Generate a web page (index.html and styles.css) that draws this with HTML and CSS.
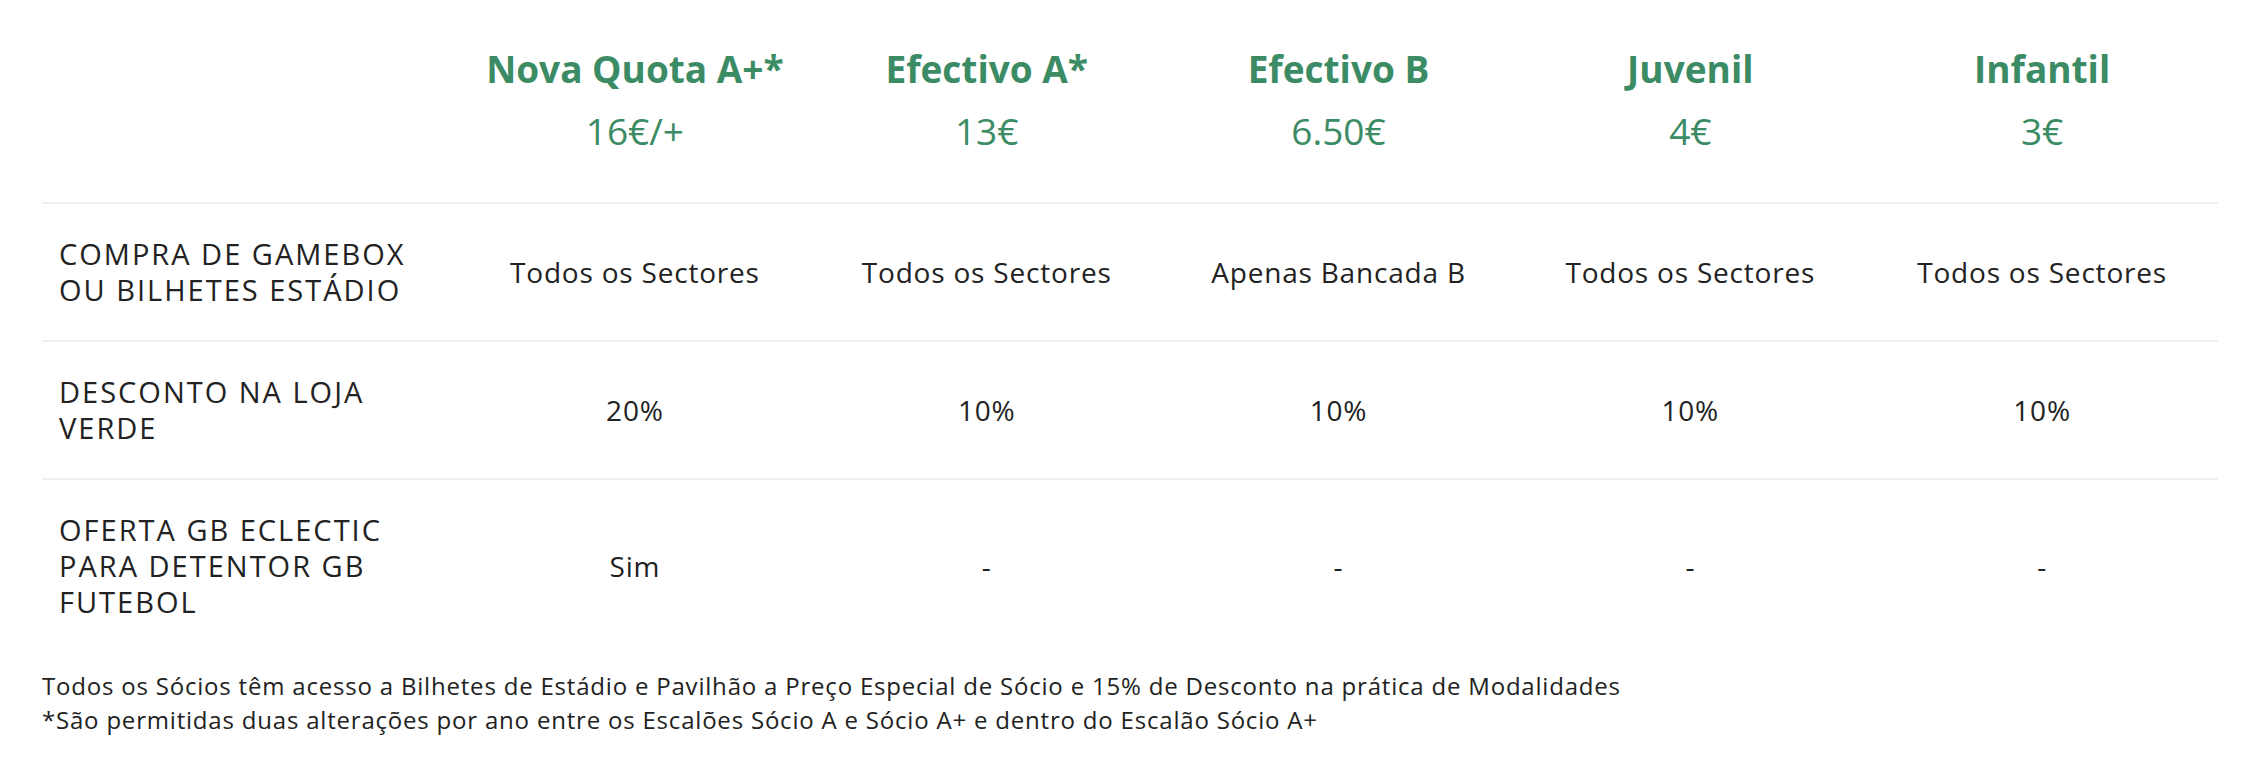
FILE: index.html
```html
<!DOCTYPE html>
<html lang="pt">
<head>
<meta charset="utf-8">
<title>Quotas</title>
<link rel="stylesheet" href="styles.css">
</head>
<body>
<div class="wrap">
  <div class="plans">
    <div class="row head">
      <div class="cell label"></div>
      <div class="cell plan"><div class="plan-name">Nova Quota A+*</div><div class="plan-price">16€/+</div></div>
      <div class="cell plan"><div class="plan-name">Efectivo A*</div><div class="plan-price">13€</div></div>
      <div class="cell plan"><div class="plan-name">Efectivo B</div><div class="plan-price">6.50€</div></div>
      <div class="cell plan"><div class="plan-name">Juvenil</div><div class="plan-price">4€</div></div>
      <div class="cell plan"><div class="plan-name">Infantil</div><div class="plan-price">3€</div></div>
    </div>
    <div class="row">
      <div class="cell label">COMPRA DE GAMEBOX<br>OU BILHETES ESTÁDIO</div>
      <div class="cell val">Todos os Sectores</div>
      <div class="cell val">Todos os Sectores</div>
      <div class="cell val">Apenas Bancada B</div>
      <div class="cell val">Todos os Sectores</div>
      <div class="cell val">Todos os Sectores</div>
    </div>
    <div class="row">
      <div class="cell label">DESCONTO NA LOJA<br>VERDE</div>
      <div class="cell val">20%</div>
      <div class="cell val">10%</div>
      <div class="cell val">10%</div>
      <div class="cell val">10%</div>
      <div class="cell val">10%</div>
    </div>
    <div class="row last">
      <div class="cell label">OFERTA GB ECLECTIC<br>PARA DETENTOR GB<br>FUTEBOL</div>
      <div class="cell val">Sim</div>
      <div class="cell val">-</div>
      <div class="cell val">-</div>
      <div class="cell val">-</div>
      <div class="cell val">-</div>
    </div>
  </div>
  <div class="notes">
    <p>Todos os Sócios têm acesso a Bilhetes de Estádio e Pavilhão a Preço Especial de Sócio e 15% de Desconto na prática de Modalidades</p>
    <p>*São permitidas duas alterações por ano entre os Escalões Sócio A e Sócio A+ e dentro do Escalão Sócio A+</p>
  </div>
</div>
</body>
</html>
```

FILE: styles.css
```css
html, body {
  margin: 0;
  padding: 0;
  background: #ffffff;
}

body {
  font-family: "Open Sans", "Liberation Sans", sans-serif;
  color: #222222;
}

.wrap {
  padding: 0 32px 0 42px;
}

.row {
  display: grid;
  grid-template-columns: 417px repeat(5, 1fr);
  border-bottom: 2px solid #efefef;
}

.row.last {
  border-bottom: none;
}

.cell {
  display: flex;
  align-items: center;
  justify-content: center;
  text-align: center;
  padding: 32px 0;
}

.cell.label {
  justify-content: flex-start;
  text-align: left;
  padding-left: 17px;
  font-size: 29px;
  font-weight: 500;
  line-height: 36px;
  letter-spacing: 2px;
}

.head .cell {
  flex-direction: column;
  padding: 47px 0 49px;
}

.plan-name {
  color: #3b8b65;
  font-size: 37px;
  font-weight: 700;
  line-height: 44px;
}

.plan-price {
  margin-top: 18px;
  color: #3b8b65;
  font-size: 37px;
  font-weight: 400;
  line-height: 44px;
}

.cell.val {
  font-size: 28px;
  font-weight: 400;
  line-height: 36px;
  letter-spacing: 0.8px;
}

.notes {
  margin-top: 17px;
}

.notes p {
  margin: 0;
  font-size: 24px;
  line-height: 34px;
  letter-spacing: 0.8px;
}
```
